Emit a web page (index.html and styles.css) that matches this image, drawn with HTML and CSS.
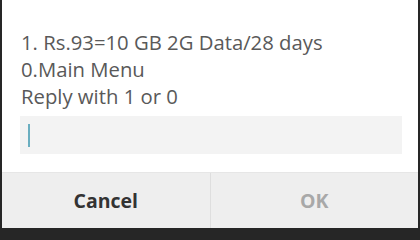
FILE: index.html
```html
<!DOCTYPE html>
<html>
<head>
<meta charset="utf-8">
<link rel="stylesheet" href="styles.css">
</head>
<body>
<div class="dialog">
  <div class="body">
    <div class="message">
      <div class="line">1. Rs.93=10 GB 2G Data/28 days</div>
      <div class="line">0.Main Menu</div>
      <div class="line">Reply with 1 or 0</div>
    </div>
    <div class="input"><span class="cursor"></span></div>
  </div>
  <div class="buttons">
    <div class="btn cancel">Cancel</div>
    <div class="btn ok">OK</div>
  </div>
</div>
</body>
</html>
```
FILE: styles.css
```css
html, body {
  margin: 0;
  padding: 0;
  width: 420px;
  height: 232px;
  overflow: hidden;
  background: #262626;
}
.dialog {
  margin: 0 2px 0 2px;
  width: 416px;
  height: 228px;
  background: #ffffff;
  display: flex;
  flex-direction: column;
  font-family: "Open Sans", "Noto Sans", sans-serif;
}
.body {
  flex: 1;
  padding: 29px 16px 0 18px;
}
.message {
  color: #595959;
  font-size: 20.3px;
  line-height: 27px;
  padding-left: 1px;
}
.input {
  margin-top: 6px;
  height: 38px;
  background: #f3f3f3;
  display: flex;
  align-items: center;
  padding-left: 8px;
}
.cursor {
  display: block;
  width: 2px;
  height: 23px;
  background: #6aaec0;
}
.buttons {
  height: 56px;
  display: flex;
  background: #eeeeee;
  border-top: 1px solid #e6e6e6;
  box-sizing: border-box;
}
.btn {
  flex: 1;
  display: flex;
  align-items: center;
  justify-content: center;
  font-size: 19.5px;
  font-weight: bold;
}
.cancel {
  color: #333333;
  border-right: 1px solid #dedede;
}
.ok {
  color: #a8a8a8;
}
```
